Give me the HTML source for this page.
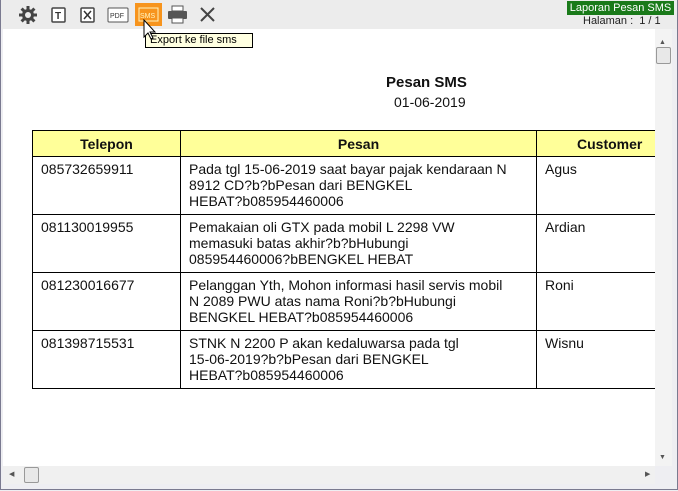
<!DOCTYPE html><html><head><style>
body{margin:0;width:678px;height:491px;overflow:hidden;background:#eeeef2;font-family:"Liberation Sans",Arial,sans-serif;position:relative}
.frame{position:absolute;left:0;top:0;width:676px;height:489px;border:1px solid #7a7a90;border-top:none}
.tb{position:absolute;left:1px;top:0;width:676px;height:29px;background:#ececec}
.content{position:absolute;left:3px;top:29px;width:652px;height:437px;background:#fff;overflow:hidden}
.vs{position:absolute;left:655px;top:29px;width:17px;height:437px;background:#f3f3f3}
.hs{position:absolute;left:3px;top:466px;width:652px;height:18px;background:#f0f0f0}
.t{position:absolute;font-size:14px;color:#111;line-height:16px;white-space:nowrap}
table{position:absolute;left:29px;top:101px;border-collapse:collapse;font-size:14px;color:#111;table-layout:fixed;width:670px}
td,th{border:1.5px solid #000;vertical-align:top;padding:0;overflow:hidden}
th{background:#ffff99;height:25px;font-weight:bold;font-size:14px;vertical-align:middle}
td{height:51px;padding:4px 8px 2px;line-height:16px;white-space:nowrap}
</style></head><body>
<div class="frame"></div>
<div class="tb">
<svg width="260" height="29" style="position:absolute;left:0;top:0">
<g transform="translate(27,15)" fill="#444"><circle r="6"/><g stroke="#444" stroke-width="3"><line x1="0" y1="-9" x2="0" y2="9"/><line x1="-9" y1="0" x2="9" y2="0"/><line x1="-6.4" y1="-6.4" x2="6.4" y2="6.4"/><line x1="-6.4" y1="6.4" x2="6.4" y2="-6.4"/></g><circle r="3" fill="#ececec"/></g>
<rect x="51" y="8" width="13" height="14" fill="#fff" stroke="#444" stroke-width="1.5" rx="1"/><text x="54" y="19" font-size="10" font-weight="bold" fill="#333" font-family="Liberation Sans">T</text>
<rect x="80" y="8" width="13" height="14" fill="#fff" stroke="#444" stroke-width="1.5" rx="1"/><path d="M83 11l7 8M90 11l-7 8" stroke="#333" stroke-width="1.5"/>
<rect x="107" y="8" width="20" height="14" fill="#fff" stroke="#555" rx="1"/><text x="109" y="18" font-size="7" fill="#333" font-family="Liberation Sans">PDF</text>
<rect x="134" y="3" width="27" height="23" fill="#f7941d"/><rect x="138" y="8" width="19" height="13" fill="none" stroke="#fff4c0"/><text x="139" y="18" font-size="7" fill="#fff4c0" font-family="Liberation Sans">SMS</text>
<rect x="167" y="11" width="19" height="8" fill="#555" rx="1"/><rect x="171" y="6" width="11" height="5" fill="#fff" stroke="#555"/><rect x="171" y="18" width="11" height="5" fill="#fff" stroke="#555"/>
<path d="M200 8l13 13M213 8l-13 13" stroke="#444" stroke-width="2"/>
</svg>
<div style="position:absolute;left:566px;top:1px;width:107px;height:14px;background:#1a7a1a;color:#fff;font-size:11px;line-height:14px;text-align:center;white-space:nowrap">Laporan Pesan SMS</div>
<div style="position:absolute;left:582px;top:15px;font-size:11px;color:#222;white-space:nowrap">Halaman :&nbsp; 1 / 1</div>
</div>
<div class="content">
<div class="t" style="left:383px;top:46px;font-weight:bold;font-size:15px">Pesan SMS</div>
<div class="t" style="left:391px;top:65px">01-06-2019</div>
<table>
<colgroup><col style="width:148px"><col style="width:356px"><col style="width:166px"></colgroup>
<tr><th>Telepon</th><th>Pesan</th><th style="text-align:left;padding-left:40px">Customer</th></tr>
<tr><td>085732659911</td><td>Pada tgl 15-06-2019 saat bayar pajak kendaraan N<br>8912 CD?b?bPesan dari BENGKEL<br>HEBAT?b085954460006</td><td>Agus</td></tr>
<tr><td>081130019955</td><td>Pemakaian oli GTX pada mobil L 2298 VW<br>memasuki batas akhir?b?bHubungi<br>085954460006?bBENGKEL HEBAT</td><td>Ardian</td></tr>
<tr><td>081230016677</td><td>Pelanggan Yth, Mohon informasi hasil servis mobil<br>N 2089 PWU atas nama Roni?b?bHubungi<br>BENGKEL HEBAT?b085954460006</td><td>Roni</td></tr>
<tr><td>081398715531</td><td>STNK N 2200 P akan kedaluwarsa pada tgl<br>15-06-2019?b?bPesan dari BENGKEL<br>HEBAT?b085954460006</td><td>Wisnu</td></tr>
</table>
<div style="position:absolute;left:142px;top:4px;width:102px;height:13px;background:#ffffe1;border:1px solid #000;font-size:11px;line-height:13px;padding-left:4px;white-space:nowrap">Export ke file sms</div>
</div>
<svg width="20" height="24" style="position:absolute;left:142px;top:19px"><path d="M2 1l0 17 4-4 3 6 2-1-3-6 5 0z" fill="#fff" stroke="#000" stroke-width="1"/></svg>
<div class="vs"><div style="position:absolute;left:4px;top:10px;font-size:7px;color:#555">▲</div><div style="position:absolute;left:1px;top:18px;width:13px;height:15px;border:1px solid #999;background:#e8e8e8;border-radius:2px"></div><div style="position:absolute;left:4px;top:425px;font-size:7px;color:#555">▼</div></div>
<div class="hs"><div style="position:absolute;left:6px;top:4px;font-size:7px;color:#555">◀</div><div style="position:absolute;left:21px;top:1px;width:13px;height:14px;border:1px solid #999;background:#e8e8e8;border-radius:2px"></div><div style="position:absolute;left:642px;top:4px;font-size:7px;color:#555">▶</div></div>
</body></html>
